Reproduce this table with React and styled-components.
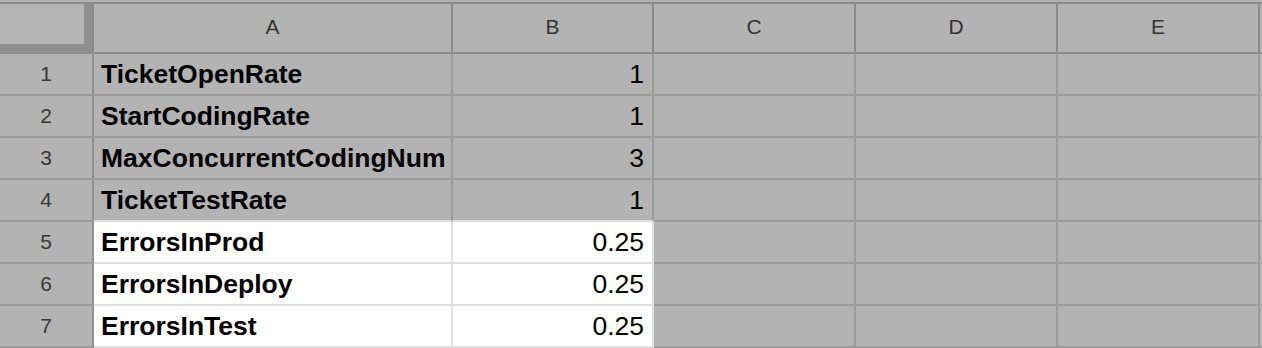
import styled, { createGlobalStyle } from 'styled-components';

const GlobalStyle = createGlobalStyle`
  html,
  body {
    margin: 0;
    padding: 0;
    background: #b3b3b3;
    overflow: hidden;
  }
`;

const COLUMNS = ['A', 'B', 'C', 'D', 'E'];

const ROWS = [
  { name: 'TicketOpenRate', value: '1' },
  { name: 'StartCodingRate', value: '1' },
  { name: 'MaxConcurrentCodingNum', value: '3' },
  { name: 'TicketTestRate', value: '1' },
  { name: 'ErrorsInProd', value: '0.25', lit: true },
  { name: 'ErrorsInDeploy', value: '0.25', lit: true },
  { name: 'ErrorsInTest', value: '0.25', lit: true },
];

function App() {
  return (
    <>
      <GlobalStyle />
      <SheetFrame>
        <Grid>
          <CornerCell>
            <FreezeHandle />
          </CornerCell>
          {COLUMNS.map((col) => (
            <ColumnHead key={col}>{col}</ColumnHead>
          ))}
          <ColumnHead $blank />

          {ROWS.map((row, i) => {
            const nextLit = ROWS[i + 1]?.lit;
            const under = row.lit || nextLit ? 'light' : 'grid';
            return [
              <RowHead key={`h${i}`}>{i + 1}</RowHead>,
              <Cell key={`a${i}`} $lit={row.lit} $under={under} $bold>
                {row.name}
              </Cell>,
              <Cell key={`b${i}`} $lit={row.lit} $under={under} $right>
                {row.value}
              </Cell>,
              <Cell key={`c${i}`} />,
              <Cell key={`d${i}`} />,
              <Cell key={`e${i}`} />,
              <Cell key={`f${i}`} $edge />,
            ];
          })}

          {/* next row, only its top edge shows below the fold */}
          <RowHead />
          <Cell />
          <Cell />
          <Cell />
          <Cell />
          <Cell />
          <Cell $edge />
        </Grid>
      </SheetFrame>
    </>
  );
}

export default App;

const SheetFrame = styled.div`
  width: 1262px;
  height: 348px;
  padding-top: 2px;
  box-sizing: border-box;
  overflow: hidden;
  background: #b3b3b3;
  font-family: 'Liberation Sans', Arial, sans-serif;
`;

const Grid = styled.div`
  display: grid;
  grid-template-columns: 94px 359px 201px 202px 202px 202px 1fr;
  grid-auto-rows: 42px;
  grid-template-rows: 50px;
  border-top: 2px solid #8b8b8b;
`;

const CornerCell = styled.div`
  display: flex;
  border-right: 2px solid #8c8c8c;
  border-bottom: 2px solid #8c8c8c;
`;

const FreezeHandle = styled.div`
  flex: 1;
  background: #b4b4b4;
  border-right: 8px solid #8f8f8f;
  border-bottom: 8px solid #8f8f8f;
`;

const ColumnHead = styled.div`
  display: flex;
  align-items: center;
  justify-content: center;
  padding-bottom: 2px;
  border-right: ${({ $blank }) => ($blank ? 'none' : '2px solid #8c8c8c')};
  border-bottom: 2px solid #8b8b8b;
  color: #333333;
  font-size: 21px;
`;

const RowHead = styled.div`
  display: flex;
  align-items: center;
  justify-content: center;
  border-right: 2px solid #8f8f8f;
  border-bottom: 2px solid #9a9a9a;
  color: #383838;
  font-size: 21px;
`;

const Cell = styled.div`
  display: flex;
  align-items: center;
  justify-content: ${({ $right }) => ($right ? 'flex-end' : 'flex-start')};
  padding: 0 ${({ $right }) => ($right ? '8px' : '0')} 0
    ${({ $right }) => ($right ? '0' : '7px')};
  overflow: hidden;
  white-space: nowrap;
  background: ${({ $lit }) => ($lit ? '#ffffff' : '#b3b3b3')};
  border-right: ${({ $edge, $lit }) =>
    $edge ? 'none' : `2px solid ${$lit ? '#e2e2e2' : '#9c9c9c'}`};
  border-bottom: 2px solid
    ${({ $under }) => ($under === 'light' ? '#dedede' : '#9c9c9c')};
  color: #000;
  font-size: 26.5px;
  font-weight: ${({ $bold }) => ($bold ? 700 : 400)};
`;
